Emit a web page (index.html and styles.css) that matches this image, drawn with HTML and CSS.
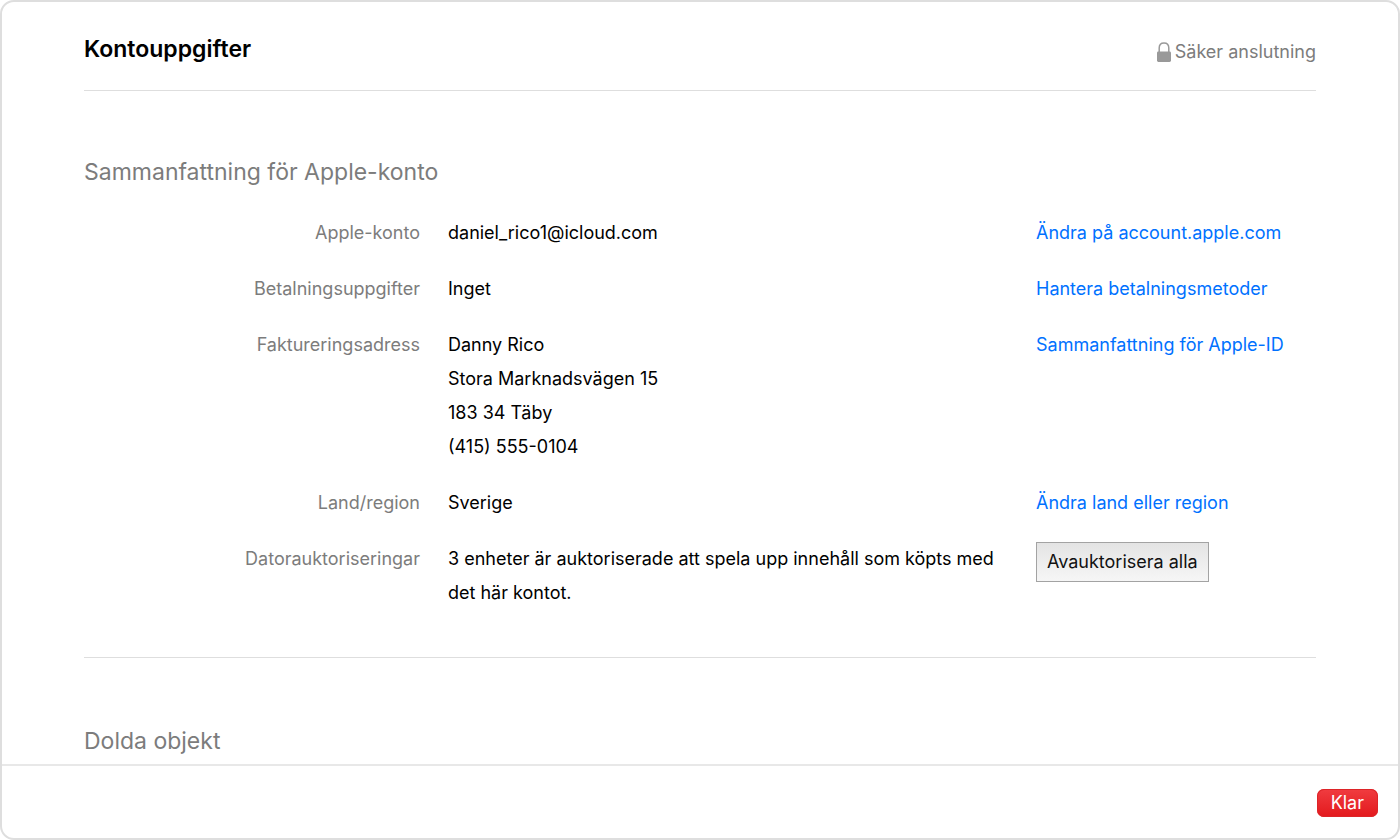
FILE: index.html
```html
<!DOCTYPE html>
<html lang="sv">
<head>
<meta charset="utf-8">
<meta name="viewport" content="width=device-width, initial-scale=1">
<title>Kontouppgifter</title>
<link rel="stylesheet" href="styles.css">
</head>
<body>
<div class="window">
  <main class="content">
    <header class="header">
      <h1 class="title">Kontouppgifter</h1>
      <div class="secure">
        <svg class="lock" width="14" height="20" viewBox="0 0 14 20" aria-hidden="true"><path d="M2.2 10V6C2.2 2.8 4.2 1 7 1S11.8 2.8 11.8 6V10" fill="none" stroke="#999" stroke-width="1.5"/><rect x="0" y="9.5" width="14" height="10.5" rx="1.4" fill="#999"/></svg>
        <span>Säker anslutning</span>
      </div>
    </header>
    <section class="summary">
      <h2 class="heading">Sammanfattning för Apple-konto</h2>
      <dl class="rows">
        <div class="row"><dt class="label">Apple-konto</dt><dd class="value">daniel_rico1@icloud.com</dd><dd class="action"><a href="#account">Ändra på account.apple.com</a></dd></div>
        <div class="row"><dt class="label">Betalningsuppgifter</dt><dd class="value">Inget</dd><dd class="action"><a href="#payment">Hantera betalningsmetoder</a></dd></div>
        <div class="row"><dt class="label">Faktureringsadress</dt><dd class="value">Danny Rico<br>Stora Marknadsvägen 15<br>183 34 Täby<br>(415) 555-0104</dd><dd class="action"><a href="#summary">Sammanfattning för Apple-ID</a></dd></div>
        <div class="row"><dt class="label">Land/region</dt><dd class="value">Sverige</dd><dd class="action"><a href="#region">Ändra land eller region</a></dd></div>
        <div class="row"><dt class="label">Datorauktoriseringar</dt><dd class="value">3 enheter är auktoriserade att spela upp innehåll som köpts med det här kontot.</dd><dd class="action"><button class="deauthorize" type="button">Avauktorisera alla</button></dd></div>
      </dl>
    </section>
    <section class="hidden-items">
      <h2 class="heading">Dolda objekt</h2>
    </section>
  </main>
  <footer class="footer"><button class="done" type="button">Klar</button></footer>
</div>
</body>
</html>
```
FILE: styles.css
```css
* { box-sizing: border-box; }
body {
  margin: 0;
  background: #fff;
  color: #000;
  font: 18px/34px Inter, "Liberation Sans", sans-serif;
}
.window {
  display: flex;
  flex-direction: column;
  min-height: 100vh;
  border: 2px solid #dedede;
  border-radius: 14px;
  overflow: hidden;
}
.content { flex: 1; padding: 0 82px; }
.header {
  display: flex;
  justify-content: space-between;
  align-items: center;
  height: 89px;
  padding-top: 6px;
  border-bottom: 1px solid #dedede;
}
.title { margin: 0; font-size: 23px; font-weight: 600; }
.secure { display: flex; align-items: center; gap: 4px; padding-top: 6px; color: #7c7c7c; }
.heading { margin: 0; font-size: 23px; font-weight: 400; color: #7c7c7c; }
.summary { padding: 64px 0 47px; border-bottom: 1px solid #dedede; }
.rows { display: grid; gap: 22px; margin: 27px 0 0; }
.row { display: grid; grid-template-columns: 3fr 5fr 280px; column-gap: 28px; }
.label { color: #7c7c7c; text-align: right; }
.value, .action { margin: 0; }
.action a { color: #0071ff; text-decoration: none; }
.deauthorize {
  height: 40px;
  padding: 0 10px;
  border: 1px solid #a3a3a3;
  background: linear-gradient(#e4e4e4, #f6f6f6);
  color: #111;
  font: inherit;
}
.hidden-items { padding-top: 66px; }
.footer {
  display: flex;
  justify-content: flex-end;
  align-items: center;
  height: 74px;
  padding: 2px 20px 0;
  border-top: 2px solid #e8e8e8;
}
.done {
  height: 28px;
  padding: 0 14px;
  border: 0;
  border-radius: 7px;
  background: linear-gradient(#f03c40, #e3191d);
  box-shadow: inset 0 0 0 1px #dd2428;
  color: #fff;
  font: inherit;
  line-height: 26px;
}
```
